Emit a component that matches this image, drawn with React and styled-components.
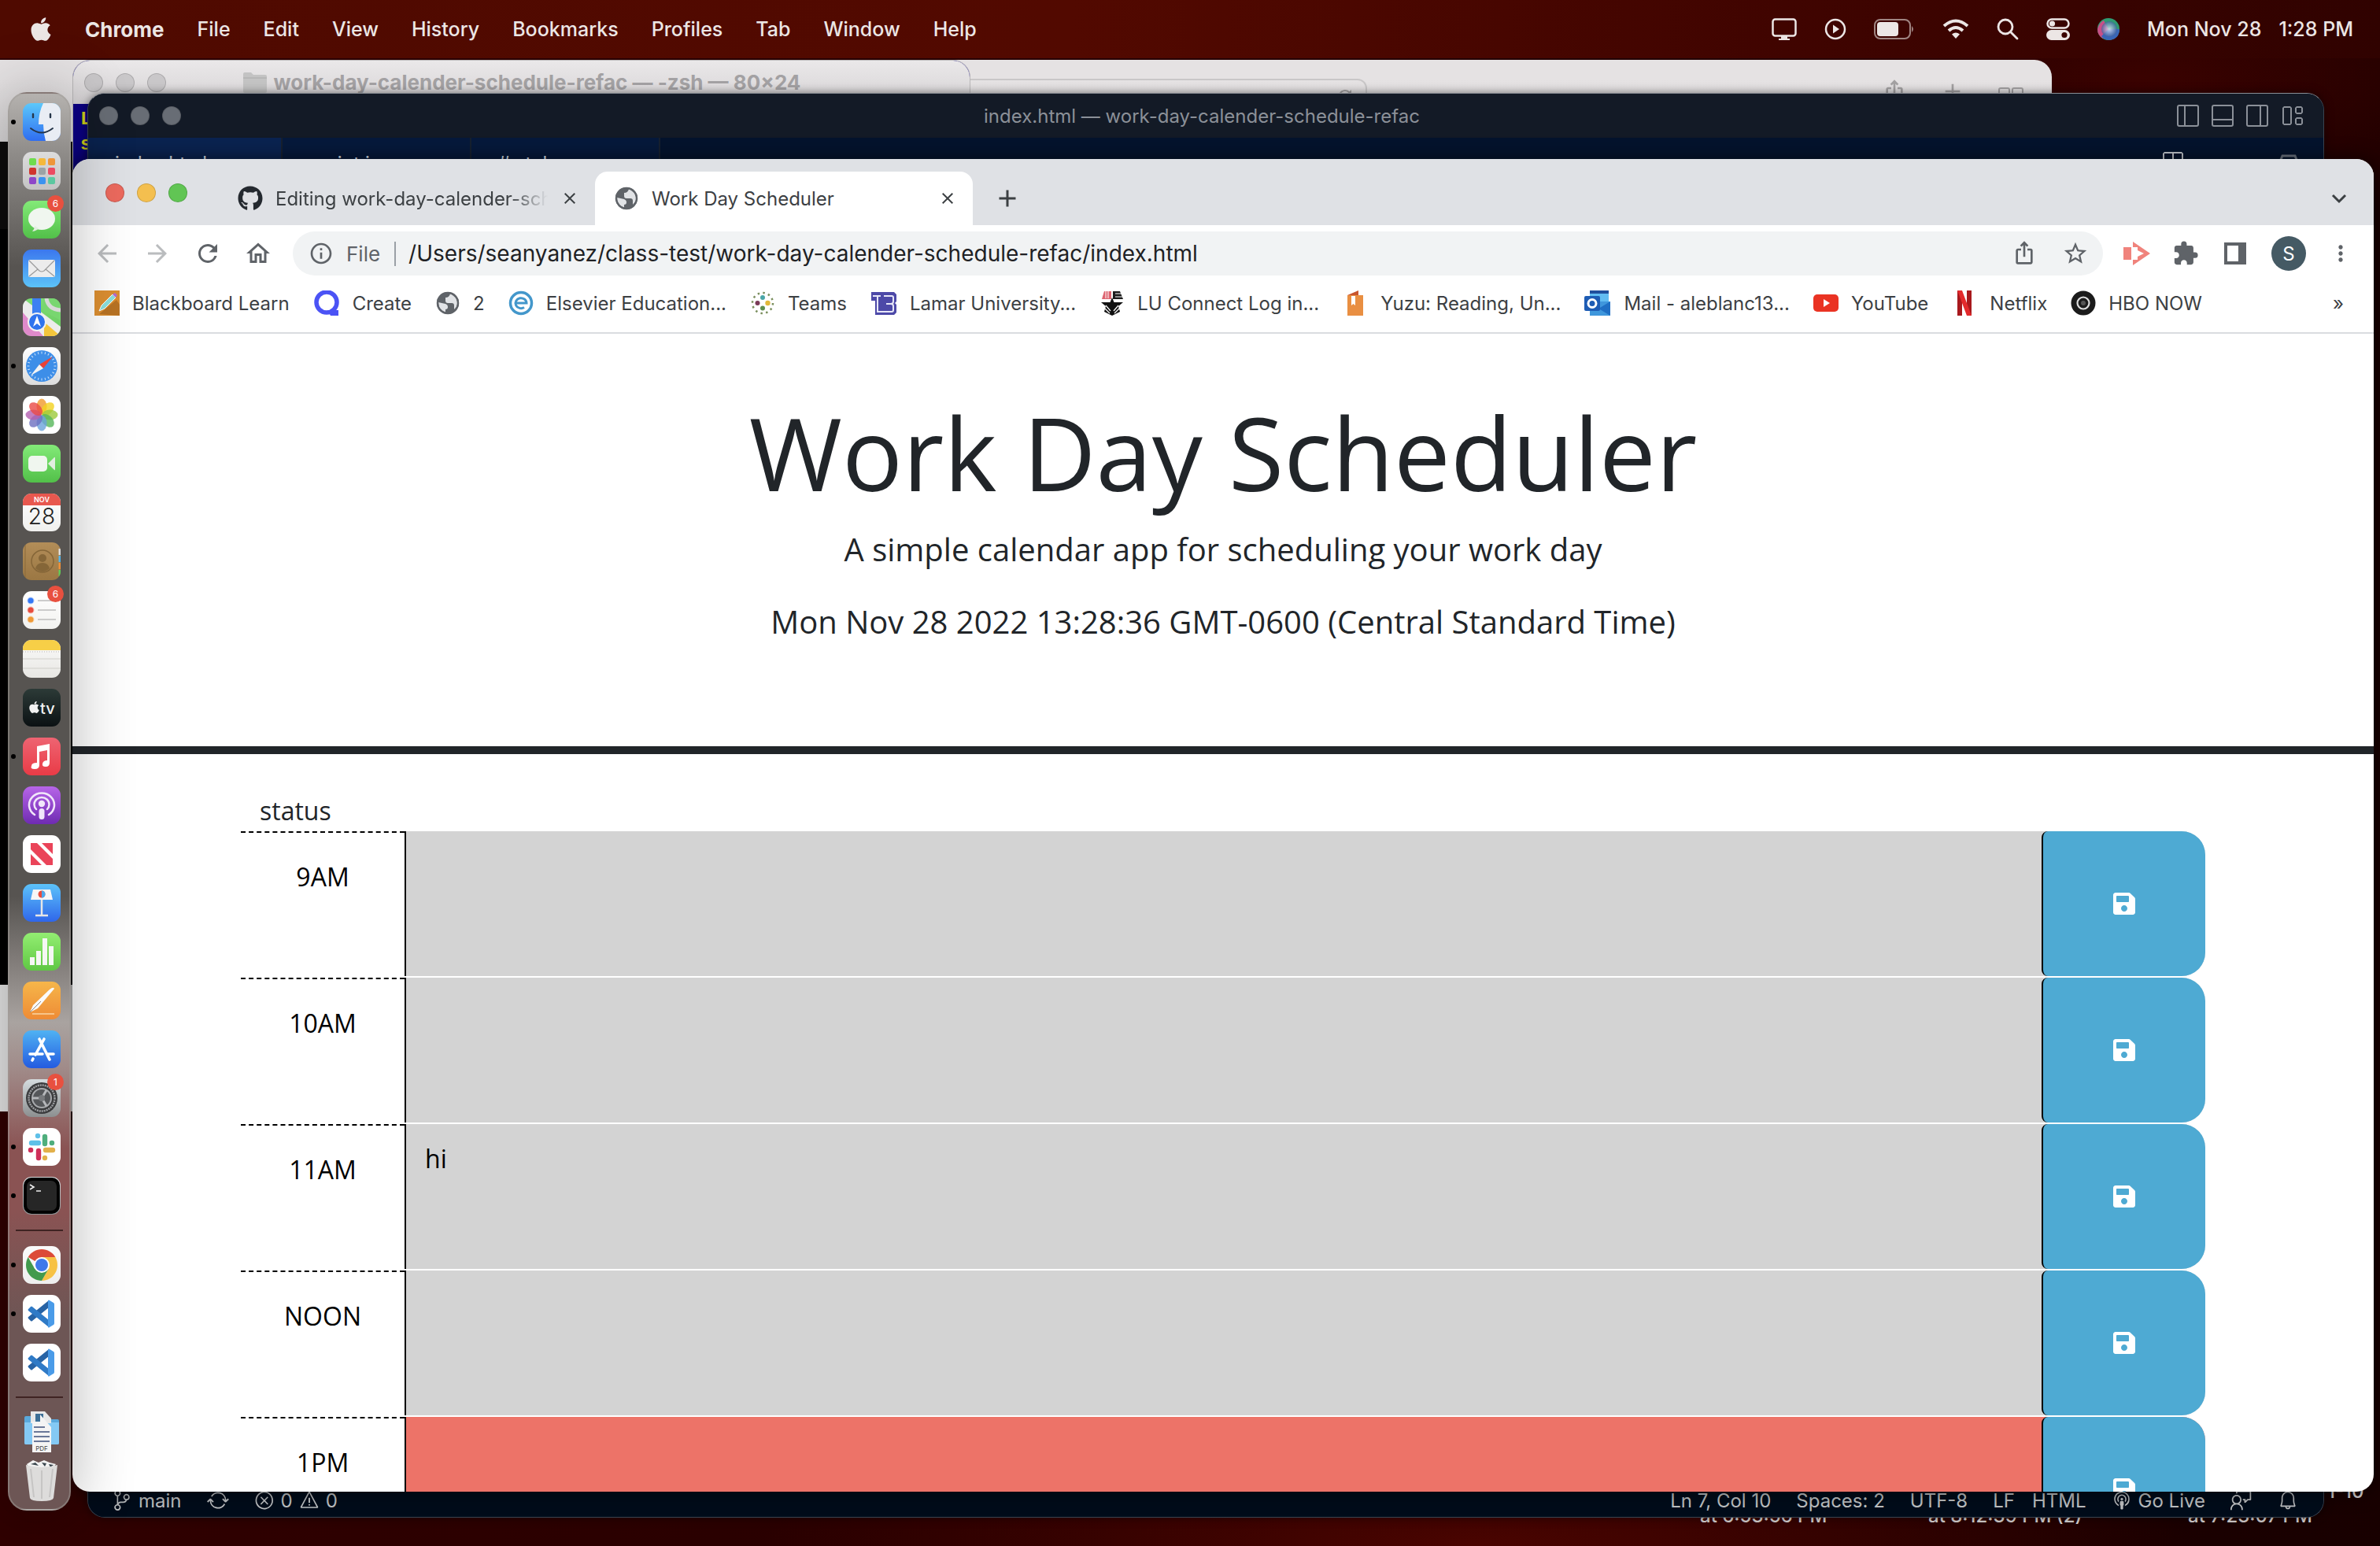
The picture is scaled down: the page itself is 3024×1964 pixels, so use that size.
import React from "react";
import styled, { createGlobalStyle, css } from "styled-components";
import { FaApple, FaSave, FaGithub } from "react-icons/fa";
import {
  MdArrowBack, MdArrowForward, MdRefresh, MdOutlineHome, MdInfoOutline, MdIosShare,
  MdStarBorder, MdExtension, MdMoreVert, MdClose, MdAdd,
} from "react-icons/md";
import {
  VscLayout, VscSourceControl,
  VscSync, VscError, VscWarning, VscBell, VscBroadcast, VscFeedback, VscSplitHorizontal,
} from "react-icons/vsc";

const ui = `Inter, "Liberation Sans", sans-serif`;
const web = `"Open Sans", "Noto Sans", sans-serif`;

const Global = createGlobalStyle`
  *, *::before, *::after { box-sizing: border-box; }
  body { margin: 0; background: #250000; font-family: ${ui}; }
  button, input, textarea { font: inherit; color: inherit; border: 0; padding: 0; margin: 0; background: none; }
  a { color: inherit; text-decoration: none; }
  svg { display: block; flex: none; }
`;

const Desktop = styled.div`
  position: relative;
  height: 100vh;
  overflow: hidden;
  background:
    radial-gradient(ellipse 30% 8% at 62% 100%, #4a0400, transparent),
    radial-gradient(ellipse 20% 10% at 90% 5%, #3a0200, transparent),
    linear-gradient(90deg, #300000, #240000 60%, #180000);
`;

/* ---------- menu bar ---------- */
const MenuBar = styled.header`
  height: 74px;
  display: flex;
  align-items: center;
  justify-content: space-between;
  padding: 0 34px 0 38px;
  background: linear-gradient(90deg, #4f0a00, #520900 45%, #400400 75%, #300200);
  color: #ece6e5;
  font-size: 25px;
  font-weight: 500;
`;
const MenuList = styled.nav`
  display: flex;
  align-items: center;
  gap: 42px;
`;
const AppleMenu = styled.button`
  width: 28px;
  display: flex;
  justify-content: center;
`;
const MenuItem = styled.button`
  font-size: ${(p) => (p.$strong ? 26 : 25)}px;
  font-weight: ${(p) => (p.$strong ? 700 : 500)};
`;
const StatusList = styled.div`
  display: flex;
  align-items: center;
  gap: 35px;
`;
const Clock = styled.time`
  display: flex;
  gap: 22px;
`;

/* ---------- windows ---------- */
const windowBase = css`
  position: absolute;
  overflow: hidden;
  border-radius: 22px;
`;
const SafariWindow = styled.section`
  ${windowBase}
  top: 76px;
  left: -40px;
  right: 417px;
  height: 1336px;
  background: linear-gradient(#e5e2e3 0 25px, #dad8d9 104px, #0d0c0c 104px 215px, #000 215px 1175px, #e6e6e6 1175px);
`;
const SafariBar = styled.div`
  height: 104px;
  padding: 24px 36px 0;
  display: flex;
  justify-content: flex-end;
  gap: 42px;
  color: #a3a1a2;
`;
const SafariField = styled.div`
  flex: none;
  width: 560px;
  height: 60px;
  margin-right: 612px;
  padding: 8px 14px;
  display: flex;
  justify-content: flex-end;
  border: 2px solid #c9c7c8;
  border-radius: 12px;
`;
const TerminalWindow = styled.section`
  ${windowBase}
  top: 76px;
  left: 92px;
  width: 1141px;
  height: 700px;
  background: #0c0087;
  border: 1px solid #b9b7b8;
  color: #e2e21c;
`;
const TerminalBar = styled.div`
  height: 55px;
  padding: 0 14px;
  display: grid;
  grid-template-columns: 1fr auto 1fr;
  align-items: center;
  background: linear-gradient(#eae8e9, #d6d3d5);
  color: #a3a1a3;
  font-size: 26px;
  font-weight: 700;
`;
const TerminalTitle = styled.div`
  display: flex;
  align-items: center;
  gap: 8px;
`;
const TerminalText = styled.pre`
  margin: 0;
  padding: 4px 9px;
  font: 700 24px/32px "Liberation Mono", monospace;
`;
const Lights = styled.div`
  display: flex;
  gap: 16px;
`;
const Light = styled.span`
  width: 24px;
  height: 24px;
  border-radius: 50%;
  background: ${(p) => p.$c};
  border: 1px solid rgba(0, 0, 0, 0.15);
`;
const CodeWindow = styled.section`
  ${windowBase}
  top: 118px;
  left: 111px;
  right: 71px;
  bottom: 36px;
  display: flex;
  flex-direction: column;
  background: #04132d;
  border: 1px solid #3a4450;
  border-top-color: #8b8f96;
  box-shadow: 0 0 12px rgba(0, 0, 0, 0.5);
`;
const CodeBar = styled.div`
  height: 56px;
  flex: none;
  padding: 0 24px 0 14px;
  display: grid;
  grid-template-columns: 1fr auto 1fr;
  align-items: center;
  background: #131a26;
  color: #8b9098;
  font-size: 24px;
`;
const CodeActions = styled.div`
  display: flex;
  justify-content: flex-end;
  gap: 12px;
`;
const CodeTabs = styled.div`
  flex: 1;
  display: flex;
  align-items: flex-start;
  color: #dfe5ee;
  font-size: 24px;
`;
const CodeTab = styled.div`
  width: ${(p) => (p.$active ? 247 : 240)}px;
  height: 70px;
  padding: 18px 34px;
  background: ${(p) => (p.$active ? "#0a2350" : "#06193b")};
  border-right: 2px solid #16202f;
`;
const CodeTabActions = styled.div`
  margin-left: auto;
  padding: 16px 28px;
  display: flex;
  gap: 116px;
  color: #c4c8ce;
`;
const CodeStatus = styled.footer`
  height: 42px;
  flex: none;
  padding: 0 32px 0 30px;
  display: flex;
  align-items: center;
  justify-content: space-between;
  background: #000c1a;
  color: #bfc1c3;
  font-size: 24px;
`;
const StatusSide = styled.div`
  display: flex;
  align-items: center;
  gap: 32px;
`;
const StatusItem = styled.span`
  display: flex;
  align-items: center;
  gap: 8px;
`;
const FileFormat = styled(StatusItem)`
  gap: 22px;
`;
const DesktopLabel = styled.span`
  position: absolute;
  left: ${(p) => p.$x}px;
  bottom: ${(p) => p.$b}px;
  color: #d9d4d4;
  font-size: 24px;
  font-weight: 500;
  line-height: 28px;
`;

/* ---------- browser ---------- */
const Browser = styled.section`
  ${windowBase}
  top: 202px;
  left: 92px;
  right: 8px;
  bottom: 69px;
  display: flex;
  flex-direction: column;
  background: #fff;
  color: #3c4043;
  box-shadow: 0 0 24px rgba(0, 0, 0, 0.6);
`;
const TabStrip = styled.div`
  height: 84px;
  flex: none;
  display: flex;
  align-items: flex-end;
  padding: 0 32px 0 42px;
  background: #dfe1e5;
  font-size: 24px;
`;
const StripLights = styled(Lights)`
  height: 70px;
  align-items: center;
  align-self: flex-start;
  padding-top: 16px;
`;
const Tab = styled.div`
  width: ${(p) => (p.$active ? 480 : 478)}px;
  height: 68px;
  margin-left: ${(p) => (p.$active ? 0 : 40)}px;
  padding: 0 20px 0 24px;
  display: flex;
  align-items: center;
  gap: 16px;
  background: ${(p) => (p.$active ? "#fff" : "transparent")};
  border-radius: 16px 16px 0 0;
`;
const TabName = styled.button`
  flex: 1;
  min-width: 0;
  overflow: hidden;
  text-align: left;
  white-space: nowrap;
  ${(p) => p.$fade && css`mask-image: linear-gradient(90deg, #000 86%, transparent);`}
`;
const IconButton = styled.button`
  display: flex;
  align-items: center;
  justify-content: center;
  height: ${(p) => p.$h || 36}px;
  color: ${(p) => p.$c || "inherit"};
  ${(p) => p.$end && css`margin-left: auto;`}
`;
const NewTab = styled(IconButton)`
  height: 68px;
  margin-left: 26px;
`;
const Toolbar = styled.div`
  height: 72px;
  flex: none;
  display: flex;
  align-items: center;
  padding: 0 26px;
  gap: 28px;
  color: #5f6368;
`;
const Omnibox = styled.label`
  flex: 1;
  height: 56px;
  margin: 0 -2px;
  padding: 0 18px 0 20px;
  display: flex;
  align-items: center;
  gap: 16px;
  border-radius: 28px;
  background: #f1f3f4;
  font-size: 26px;
`;
const Scheme = styled.span`
  padding-right: 18px;
  border-right: 2px solid #9aa0a6;
`;
const Url = styled.input`
  flex: 1;
  min-width: 0;
  color: #202124;
  font-size: 28px;
  outline: none;
`;
const OmniActions = styled.span`
  display: flex;
  gap: 32px;
`;
const Avatar = styled.button`
  width: 44px;
  height: 44px;
  border-radius: 50%;
  background: #455a64;
  color: #fff;
  font-size: 24px;
`;
const Bookmarks = styled.nav`
  height: 66px;
  flex: none;
  padding: 0 38px 10px 28px;
  display: flex;
  align-items: center;
  gap: 30px;
  border-bottom: 2px solid #dadce0;
  font-size: 24px;
`;
const Bookmark = styled.a`
  display: flex;
  align-items: center;
  gap: 16px;
  white-space: nowrap;
`;
const Page = styled.main`
  flex: 1;
  min-height: 0;
  overflow: hidden;
  font-family: ${web};
  color: #212529;
`;
const Hero = styled.header`
  height: 534px;
  padding: 74px 48px 0;
  text-align: center;
  border-bottom: 10px solid #212529;
`;
const Title = styled.h1`
  margin: 0 0 16px;
  font-size: 128px;
  font-weight: 400;
  line-height: 154px;
`;
const Lead = styled.p`
  margin: 0 0 32px;
  font-size: 40px;
  line-height: 60px;
`;
const Schedule = styled.div`
  padding: 48px 214px 0;
  font-size: 32px;
  line-height: 48px;
`;
const Status = styled.div`
  padding: 0 24px 2px;
`;
const slot = { past: "#d3d3d3", present: "#ed7368" };
const TimeBlock = styled.div`
  height: 184px;
  margin-bottom: 2px;
  display: grid;
  grid-template-columns: 1fr 10fr 1fr;
  background: ${(p) => slot[p.$when]};
  border-radius: 0 30px 30px 0;
  color: #000;
`;
const Hour = styled.label`
  padding-top: 32px;
  text-align: center;
  background: #fff;
  border-top: 2px dashed #000;
`;
const Entry = styled.textarea`
  padding: 20px 24px;
  resize: none;
  outline: none;
  border-left: 2px solid #000;
`;
const SaveButton = styled.button`
  display: flex;
  align-items: center;
  justify-content: center;
  color: #fff;
  background: #4eaad3;
  border-left: 2px solid #000;
  border-radius: 8px 30px 30px 8px;
`;

/* ---------- dock ---------- */
const Dock = styled.aside`
  position: absolute;
  left: 10px;
  top: 117px;
  width: 80px;
  padding: 12px 0 12px 6px;
  display: flex;
  flex-direction: column;
  align-items: center;
  gap: 14px;
  border: 2px solid rgba(160, 155, 152, 0.5);
  border-radius: 24px;
  background: linear-gradient(#b5b2af, #8d8a87 80px, #575451 220px, #575451 1020px, #a9a3a0 1180px, #a08a88 1240px, #8a5353 1340px, #8a5353 1420px, #6d5655 1560px, #6d5655);
  box-shadow: 0 0 80px rgba(0, 0, 0, 0.3);
`;
const DockApp = styled.button`
  position: relative;
  width: 48px;
  height: 48px;
  display: flex;
  align-items: center;
  ${(p) => p.$running && css`
    &::before {
      content: "";
      position: absolute;
      left: -15px;
      top: 21px;
      width: 6px;
      height: 6px;
      border-radius: 50%;
      background: #000;
    }
  `}
`;
const Badge = styled.span`
  position: absolute;
  right: -4px;
  top: -7px;
  width: 21px;
  height: 21px;
  border-radius: 50%;
  background: #e8503f;
  color: #fff;
  font-size: 12px;
  line-height: 21px;
  text-align: center;
`;
const DockRule = styled.hr`
  width: 60px;
  height: 2px;
  margin: 5px 6px 5px 0;
  border: 0;
  background: #3f2322;
`;

const Art = ({ a, b, children, id }) => (
  <svg width="48" height="48" viewBox="0 0 48 48" aria-hidden="true">
    <defs>
      <linearGradient id={id} x1="0" y1="0" x2="0" y2="1">
        <stop offset="0" stopColor={a} />
        <stop offset="1" stopColor={b} />
      </linearGradient>
      <clipPath id={`${id}-clip`}><rect width="48" height="48" rx="11" /></clipPath>
    </defs>
    <g clipPath={`url(#${id}-clip)`}>
      <rect width="48" height="48" fill={`url(#${id})`} />
      {children}
    </g>
  </svg>
);

const petals = ["#f09a2c", "#f2d21f", "#9ccb3b", "#56b65a", "#6aa3dc", "#6c6fc0", "#b35fb0", "#ea4a45"];
const ticks = Array.from({ length: 24 }, (_, i) => i * 15);

const CodeMark = () => (
  <>
    <path d="M33 7v9L12 33q-1 1-2 0l-3-3q-1-1 0-2z" fill="#2763a5" />
    <path d="M33 41v-9L12 15q-1-1-2 0l-3 3q-1 1 0 2z" fill="#2f7ac6" />
    <path d="M32 7q1-1 2 0l5 3q1 .6 1 2v24q0 1.400-1 2l-5 3q-1 1-2 0z" fill="#4a9be8" />
  </>
);

const apps = [
  { name: "Finder", running: true, art: (
    <Art id="finder" a="#5cc8fb" b="#2f6df0">
      <path d="M26 0Q20 12 20 27h6q0 11 3 21h19V0z" fill="#e9edf4" />
      <path d="M13 14v4M35 14v4" stroke="#26364a" strokeWidth="2.400" strokeLinecap="round" />
      <path d="M10 32q14 11 28 0" fill="none" stroke="#26364a" strokeWidth="2" strokeLinecap="round" />
    </Art>) },
  { name: "Launchpad", art: (
    <Art id="launchpad" a="#dcdcdc" b="#c4c4c4">
      {["#6fdc4e", "#f5b83a", "#ee963a", "#d0352f", "#9ba3a5", "#ec4a62", "#8e47c9", "#3b93f0", "#5cc8a0"].map((c, i) => (
        <rect key={c} x={8 + (i % 3) * 12} y={8 + Math.floor(i / 3) * 12} width="9" height="9" rx="2" fill={c} />
      ))}
    </Art>) },
  { name: "Messages", badge: 6, art: (
    <Art id="messages" a="#83ea78" b="#52c049">
      <ellipse cx="24" cy="23" rx="17" ry="14" fill="#f0f6ef" />
      <path d="M15 32q0 4-3 7 6-1 8-4z" fill="#e2eee0" />
    </Art>) },
  { name: "Mail", art: (
    <Art id="mail" a="#3b77ee" b="#5cc3f8">
      <rect x="7" y="13" width="34" height="22" rx="2" fill="#ececec" />
      <path d="M8 14l13 13q3 2 6 0l13-13M8 34l11-9M40 34l-11-9" fill="none" stroke="#9a9a9a" strokeWidth="1.200" />
    </Art>) },
  { name: "Maps", art: (
    <Art id="maps" a="#7ddc74" b="#67c95f">
      <path d="M0 0l48 36v12H22L0 22z" fill="#ececec" />
      <path d="M0 18l26 30H0z" fill="#df8acb" />
      <path d="M27 48V30l21 18z" fill="#f4c63c" />
      <path d="M26 0h22v28L26 16z" fill="#78d670" />
      <path d="M30 0q2 14 18 15" fill="none" stroke="#d8d8d8" strokeWidth="5" />
      <path d="M12 0h11v26H12z" fill="#3c80f2" />
      <circle cx="18" cy="30" r="11" fill="#2f74ee" stroke="#f2f2f2" strokeWidth="2" />
      <path d="M18 22l5 14-5-4-5 4z" fill="#fff" />
    </Art>) },
  { name: "Safari", running: true, art: (
    <Art id="safari" a="#ffffff" b="#dcdcdc">
      <circle cx="24" cy="24" r="20" fill="#3d8ee8" />
      {ticks.map((t) => <path key={t} d="M24 5.500v3" stroke="#cfe4fa" transform={`rotate(${t} 24 24)`} />)}
      <path d="M38 12L26 27l-5-5z" fill="#ea4236" />
      <path d="M10 36l11-14 5 5z" fill="#f4f4f4" />
    </Art>) },
  { name: "Photos", art: (
    <Art id="photos" a="#ffffff" b="#ffffff">
      {petals.map((c, i) => (
        <ellipse key={c} cx="24" cy="13.500" rx="6.500" ry="10" fill={c} fillOpacity=".8" transform={`rotate(${i * 45} 24 24)`} />
      ))}
    </Art>) },
  { name: "FaceTime", art: (
    <Art id="facetime" a="#83ea78" b="#52c049">
      <rect x="7" y="14" width="24" height="20" rx="5" fill="#f0f6ef" />
      <path d="M32 24l8-8q1-1 1 1v14q0 2-1 1z" fill="#e2eee0" />
    </Art>) },
  { name: "Calendar", art: (
    <Art id="calendar" a="#ffffff" b="#f0f0ee">
      <rect width="48" height="15" fill="#e8584f" />
      <text x="24" y="11" fontFamily="Inter, sans-serif" fontSize="9" fontWeight="600" fill="#fff" textAnchor="middle">NOV</text>
      <text x="24" y="39" fontFamily="Inter, sans-serif" fontSize="28" fontWeight="300" fill="#222" textAnchor="middle">28</text>
    </Art>) },
  { name: "Contacts", art: (
    <Art id="contacts" a="#b28d58" b="#9b7743">
      <path d="M3 0v48" stroke="#8a6a3a" />
      <circle cx="25" cy="24" r="14" fill="none" stroke="#856638" strokeWidth="1.500" />
      <circle cx="25" cy="20" r="5" fill="#856638" />
      <path d="M16 33q2-7 9-7t9 7q-9 8-18 0z" fill="#856638" />
      <path d="M47 8v8" stroke="#ddd" strokeWidth="3" />
      <path d="M47 17v8" stroke="#54b4ea" strokeWidth="3" />
      <path d="M47 26v8" stroke="#f0913a" strokeWidth="3" />
      <path d="M47 35v8" stroke="#5fce58" strokeWidth="3" />
    </Art>) },
  { name: "Reminders", badge: 6, art: (
    <Art id="reminders" a="#ffffff" b="#f2f2f0">
      {["#3478f6", "#e94c3d", "#f09a37"].map((c, i) => (
        <g key={c}>
          <circle cx="10" cy={12 + i * 12} r="3.500" fill={c} stroke={c} strokeOpacity=".35" strokeWidth="2" />
          <path d={`M19 ${12 + i * 12}h23`} stroke="#bdbdbd" strokeWidth="1.300" />
        </g>
      ))}
    </Art>) },
  { name: "Notes", art: (
    <Art id="notes" a="#fafafa" b="#e8e7e3">
      <rect width="48" height="13" fill="#f7cf47" />
      <path d="M0 15h48" stroke="#b9b7b0" strokeDasharray="1 2" />
      <path d="M0 24h48M0 36h48" stroke="#d0cfca" />
    </Art>) },
  { name: "TV", art: (
    <Art id="tv" a="#2c3a37" b="#0b1113">
      <FaApple x="6" y="15" size={17} color="#f2f2f2" />
      <text x="22" y="32" fontFamily="Inter, sans-serif" fontSize="20" fontWeight="500" fill="#f2f2f2">tv</text>
    </Art>) },
  { name: "Music", running: true, art: (
    <Art id="music" a="#ee6472" b="#e93b46">
      <path d="M18 11l16-3v24q0 5-5 5t-4-4 6-4V16l-10 2v17q0 5-6 5t-4-4q0-4 7-4z" fill="#fff" />
    </Art>) },
  { name: "Podcasts", art: (
    <Art id="podcasts" a="#b765e8" b="#6f2bb2">
      <g fill="none" stroke="#f1e6fa" strokeWidth="2.500" strokeLinecap="round">
        <path d="M15 36a16 15 0 1 1 18 0" />
        <path d="M17 29a9.500 9 0 1 1 14 0" />
      </g>
      <circle cx="24" cy="22" r="4.200" fill="#f1e6fa" />
      <rect x="20.500" y="28" width="7" height="14" rx="3.500" fill="#f1e6fa" />
    </Art>) },
  { name: "News", art: (
    <Art id="news" a="#ffffff" b="#ffffff">
      <path d="M10 10h8l20 20v8h-8L10 18z" fill="#ea4459" />
      <path d="M24 10h14v14zM10 24v14h14z" fill="#ea4459" />
    </Art>) },
  { name: "Keynote", art: (
    <Art id="keynote" a="#5cc3fa" b="#2f66ea">
      <path d="M13 7h22l3 13H10z" fill="#f6f6f6" />
      <circle cx="24" cy="13" r="4.500" fill="#e94c3d" />
      <path d="M24 13V8.500a4.500 4.500 0 0 1 0 9z" fill="#4aa9ee" />
      <path d="M24 20v20M16 40h16" stroke="#e6e6e6" strokeWidth="2.500" />
    </Art>) },
  { name: "Numbers", art: (
    <Art id="numbers" a="#93ee72" b="#5fc743">
      <path d="M9 31h6v10H9zM17 23h6v18h-6zM25 7h6v34h-6zM33 17h6v24h-6z" fill="#f5f7f4" />
    </Art>) },
  { name: "Pages", art: (
    <Art id="pages" a="#f6b64a" b="#ee8b35">
      <path d="M9 39l4-9L34 10q5-4 6-1L19 34z" fill="#fafafa" />
      <path d="M9 39l14-14" stroke="#888" />
      <path d="M12 41h28" stroke="#f9d5a5" strokeWidth="1.500" />
    </Art>) },
  { name: "App Store", art: (
    <Art id="appstore" a="#4fb2f3" b="#245be0">
      <g stroke="#fff" strokeWidth="3.600" strokeLinecap="round">
        <path d="M21 11l13 26M27 11L16 31M9 30h16M31 30h8M13 36l-1 2" />
      </g>
    </Art>) },
  { name: "System Preferences", badge: 1, art: (
    <Art id="settings" a="#d5dcdf" b="#8c8f90">
      <circle cx="24" cy="24" r="20" fill="#3a3b3d" />
      <circle cx="24" cy="24" r="16.500" fill="none" stroke="#9b9da0" strokeWidth="2.500" strokeDasharray="2 1" />
      <circle cx="24" cy="24" r="12" fill="#55575a" stroke="#a7a9ac" strokeWidth="2" />
      <path d="M24 24H12M24 24l6-10M24 24l6 10" stroke="#b5b7ba" strokeWidth="3" />
      <circle cx="24" cy="24" r="4" fill="#77797c" />
    </Art>) },
  { name: "Slack", running: true, art: (
    <Art id="slack" a="#ffffff" b="#ffffff">
      <g strokeWidth="6.400" strokeLinecap="round">
        <path d="M11 19h9M19 10v.1" stroke="#5fc0e8" />
        <path d="M28 11v9M37 19h-.1" stroke="#4fae7c" />
        <path d="M29 28h9M28 38v-.1" stroke="#e2b04a" />
        <path d="M20 29v9M10 28h.1" stroke="#cf2f59" />
      </g>
    </Art>) },
  { name: "Terminal", running: true, art: (
    <Art id="terminal" a="#d8dcde" b="#8f9395">
      <rect x="1" y="1" width="46" height="46" rx="10" fill="#000" />
      <rect x="5" y="5" width="38" height="38" rx="7" fill="#262626" />
      <path d="M9 10l5 3-5 3M17 18h6" fill="none" stroke="#eee" strokeWidth="1.600" />
    </Art>) },
];
const pinned = [
  { name: "Google Chrome", running: true, art: (
    <Art id="chrome" a="#fafafa" b="#eeeeee">
      <path d="M24 24L6.700 14A20 20 0 0 1 41.300 14z" fill="#dc4a38" />
      <path d="M24 14h17.300A20 20 0 0 1 24 44l8.600-15z" fill="#f7c244" />
      <path d="M6.700 14L15.300 29 32.600 29 24 44A20 20 0 0 1 6.700 14z" fill="#429a4d" />
      <circle cx="24" cy="24" r="10" fill="#fff" />
      <circle cx="24" cy="24" r="8" fill="#3f79ea" />
    </Art>) },
  { name: "Visual Studio Code", running: true, art: <Art id="code-a" a="#ffffff" b="#ffffff"><CodeMark /></Art> },
  { name: "Code", art: <Art id="code-b" a="#ffffff" b="#ffffff"><CodeMark /></Art> },
];

const FolderArt = () => (
  <svg width="48" height="52" viewBox="0 0 48 52" aria-hidden="true">
    <path d="M2 8q0-2 2-2h12l4 4h24q2 0 2 2v28q0 2-2 2H4q-2 0-2-2z" fill="#5aa9dc" />
    <path d="M2 14h44v26q0 2-2 2H4q-2 0-2-2z" fill="#84c9f4" />
    <path d="M10 0h18l8 9v6H10z" fill="#e8e8e8" />
    <path d="M16 3h10v10H16z" fill="#3d6f96" />
    <path d="M12 13h10V4l14 16v32H12z" fill="#f4f4f4" />
    <path d="M14 20h14M14 26h20M14 32h20M14 38h20" stroke="#6a7898" strokeWidth="2" />
    <text x="24" y="50" fontFamily="Inter, sans-serif" fontSize="8" fill="#444" textAnchor="middle">PDF</text>
  </svg>
);
const TrashArt = () => (
  <svg width="48" height="54" viewBox="0 0 48 54" aria-hidden="true">
    <path d="M5 6l8-5 7 3 7-3 7 3 8 2-4 5H8z" fill="#f2f2f2" />
    <path d="M10 6l6-2 4 4zM24 4l6 1-2 4zM33 6l6 1-4 3z" fill="#39454d" />
    <path d="M4 7q20 6 40 0l-5 42q-1 4-15 4T9 49z" fill="#dddcdb" />
    <path d="M10 12l4 36M24 14v36M38 12l-4 36" stroke="#c6c5c4" strokeWidth="2" />
  </svg>
);

const Globe = () => (
  <svg width="32" height="32" viewBox="0 0 32 32" aria-hidden="true">
    <circle cx="16" cy="16" r="14" fill="#5f6368" />
    <path d="M19 4q-1 5-6 5v4q0 3 3 3h5q3 0 3 3v5q5-4 4-10T19 4z" fill="#e8eaed" fillOpacity=".95" />
    <path d="M4 15l9 2q3 1 3 4t-3 3v4Q4 25 4 15z" fill="#e8eaed" fillOpacity=".95" />
    <circle cx="16" cy="16" r="13" fill="none" stroke="#5f6368" strokeWidth="2.500" />
  </svg>
);
const Panel = ({ line }) => (
  <svg width="32" height="32" viewBox="0 0 32 32" fill="none" stroke="currentColor" strokeWidth="2" aria-hidden="true">
    <rect x="3" y="3" width="26" height="26" rx="2" />
    <path d={line} />
  </svg>
);

const bookmarks = [
  ["Blackboard Learn", <svg width="32" height="32" viewBox="0 0 32 32"><path d="M0 0h32v32H0z" fill="#dc8f31" /><path d="M6 30L28 12l4 6v14z" fill="#b87324" /><path d="M6 26l3-7L23 5l4 4-14 14z" fill="#8be0dc" stroke="#fff" /><path d="M23 5l3-2 3 3-2 3z" fill="#b56bd0" /></svg>],
  ["Create", <svg width="34" height="32" viewBox="0 0 34 32"><circle cx="17" cy="15" r="13" fill="none" stroke="#4b53f5" strokeWidth="5.500" /><path d="M18 25h14v7H22z" fill="#4b53f5" /></svg>],
  ["2", <Globe />],
  ["Elsevier Education...", <svg width="32" height="32" viewBox="0 0 32 32"><circle cx="16" cy="16" r="13.500" fill="#fff" stroke="#4397cb" strokeWidth="3.500" /><path d="M9 16h14a7 6.500 0 1 0-3 5.500" fill="none" stroke="#4397cb" strokeWidth="3" /></svg>],
  ["Teams", <svg width="32" height="32" viewBox="0 0 32 32"><circle cx="16" cy="16" r="13" fill="none" stroke="#7b8f5e" strokeWidth="2.500" strokeDasharray="2.500 4.300" /><circle cx="16" cy="9" r="3" fill="#4aa6a8" /><circle cx="22.500" cy="16" r="3.200" fill="#e2b93a" /><circle cx="16" cy="22.500" r="3" fill="#5e8f4e" /><circle cx="9.500" cy="16" r="3" fill="#7a3b58" /></svg>],
  ["Lamar University...", <svg width="34" height="32" viewBox="0 0 34 32"><path d="M1 2h29l3 3v9l-2 2 2 2v10l-3 3H6V13H1z" fill="#4d49a8" /><path d="M3 7h10M9 7v20h18q2 0 2-2v-5q0-3-3-3h-6M17 7h10q2 0 2 2v5q0 3-3 3" fill="none" stroke="#e8e8f8" strokeWidth="2" /></svg>],
  ["LU Connect Log in...", <svg width="32" height="32" viewBox="0 0 32 32"><path d="M6 1h9v10H3z" fill="#dd6470" /><path d="M17 1h9l4 10H17z" fill="#1d1d1d" /><path d="M8 1v9M11 1v9M20 4h8M20 8h9" stroke="#fff" /><path d="M16 9l2.500 6H30l-6 5 2 7-10 5-10-5 2-7-6-5h11.500z" fill="#111" /><path d="M5 21l8 8M8 19l6 7M27 21l-8 8M24 19l-6 7" stroke="#fff" strokeWidth="1.200" /></svg>],
  ["Yuzu: Reading, Un...", <svg width="32" height="32" viewBox="0 0 32 32"><path d="M6 6h20v26H6z" fill="#e98f42" /><path d="M6 6L20 0v6z" fill="#c8552e" /><path d="M11 7h5v12l-2.500-2-2.500 2z" fill="#fff" /></svg>],
  ["Mail - aleblanc13...", <svg width="34" height="32" viewBox="0 0 34 32"><path d="M7 0h24v16H7z" fill="#62bdf2" /><path d="M7 0h24v4H7z" fill="#1f4f9c" /><path d="M7 14h26v18H7z" fill="#3f97dc" /><path d="M33 14v18L18 23z" fill="#1f6fc4" /><rect y="7" width="20" height="19" rx="2" fill="#1d5cb4" /><circle cx="10" cy="16.500" r="5" fill="none" stroke="#fff" strokeWidth="3" /></svg>],
  ["YouTube", <svg width="32" height="32" viewBox="0 0 32 32"><rect y="5" width="32" height="22" rx="5" fill="#ea3323" /><path d="M13 11l8 5-8 5z" fill="#fff" /></svg>],
  ["Netflix", <svg width="32" height="32" viewBox="0 0 32 32"><path d="M7 0h6v32H7zM19 0h6v32h-6z" fill="#a8191d" /><path d="M7 0h6l12 32h-6z" fill="#e32a2c" /></svg>],
  ["HBO NOW", <svg width="32" height="32" viewBox="0 0 32 32"><circle cx="16" cy="16" r="15.500" fill="#1b1b1b" /><circle cx="16" cy="16" r="7.500" fill="none" stroke="#ddd" strokeWidth="2.200" /><circle cx="16" cy="16" r="3" fill="#555" /></svg>],
];

const rows = [
  ["9AM", "past", ""], ["10AM", "past", ""], ["11AM", "past", "hi"], ["NOON", "past", ""], ["1PM", "present", ""],
];

const StatusIcons = () => (
  <>
    <svg width="32" height="30" viewBox="0 0 32 30"><rect x="1.500" y="2.500" width="29" height="21" rx="3" fill="none" stroke="#ece6e5" strokeWidth="2.500" /><path d="M12 24h8v3h3v2H9v-2h3z" fill="#ece6e5" /></svg>
    <svg width="28" height="28" viewBox="0 0 28 28"><circle cx="14" cy="14" r="12" fill="none" stroke="#ece6e5" strokeWidth="2.500" /><path d="M11 8.500l8 5.500-8 5.500z" fill="#ece6e5" /></svg>
    <svg width="52" height="26" viewBox="0 0 52 26"><rect x="1" y="1" width="45" height="24" rx="7" fill="none" stroke="#a08582" strokeWidth="2" /><rect x="4" y="4" width="27" height="18" rx="4" fill="#ece6e5" /><path d="M48 9q4 4 0 8z" fill="#a08582" /></svg>
    <svg width="34" height="26" viewBox="0 0 34 26" fill="none" stroke="#ece6e5" strokeWidth="4"><path d="M2 9q15-13 30 0M8 15q9-8 18 0" /><path d="M12 19.500q5-4 10 0L17 25z" fill="#ece6e5" stroke="none" /></svg>
    <svg width="28" height="28" viewBox="0 0 28 28" fill="none" stroke="#ece6e5" strokeWidth="2.800" strokeLinecap="round"><circle cx="11" cy="11" r="9" /><path d="M18 18l8 8" /></svg>
    <svg width="30" height="28" viewBox="0 0 30 28"><rect x="1.500" y="1.500" width="27" height="11" rx="5.500" fill="none" stroke="#ece6e5" strokeWidth="2.500" /><circle cx="7.500" cy="7" r="3.600" fill="#ece6e5" /><rect x="0" y="15" width="30" height="13" rx="6.500" fill="#ece6e5" /><circle cx="23" cy="21.500" r="3.600" fill="#3a0300" /></svg>
    <svg width="28" height="28" viewBox="0 0 28 28"><defs><radialGradient id="siri"><stop offset="0" stopColor="#fff" /><stop offset=".35" stopColor="#b6c4e4" /><stop offset="1" stopColor="#3c5f9c" /></radialGradient></defs><circle cx="14" cy="14" r="14" fill="#2f9a72" /><path d="M0 14q2-8 8-11l6 11-7 12Q0 22 0 14z" fill="#c94f86" /><path d="M28 14q0 12-12 14-8 0-11-5l9-9z" fill="#3a66b8" /><circle cx="15" cy="14" r="10" fill="url(#siri)" fillOpacity=".7" /></svg>
  </>
);

function DockItem({ item }) {
  return (
    <DockApp $running={item.running} aria-label={item.name}>
      {item.art}
      {item.badge && <Badge>{item.badge}</Badge>}
    </DockApp>
  );
}

export default function App() {
  return (
    <Desktop>
      <Global />
      <MenuBar>
        <MenuList>
          <AppleMenu aria-label="Apple menu"><FaApple size={34} /></AppleMenu>
          {["Chrome", "File", "Edit", "View", "History", "Bookmarks", "Profiles", "Tab", "Window", "Help"].map((m, i) => (
            <MenuItem key={m} $strong={i === 0}>{m}</MenuItem>
          ))}
        </MenuList>
        <StatusList>
          <StatusIcons />
          <Clock><span>Mon Nov 28</span><span>1:28 PM</span></Clock>
        </StatusList>
      </MenuBar>

      <DesktopLabel $x={2160} $b={24}>at 6:53:56 PM</DesktopLabel>
      <DesktopLabel $x={2450} $b={24}>at 8:12:39 PM (2)</DesktopLabel>
      <DesktopLabel $x={2780} $b={24}>at 7:23:07 PM</DesktopLabel>
      <DesktopLabel $x={2957} $b={55}>1-10</DesktopLabel>

      <SafariWindow>
        <SafariBar>
          <SafariField><MdRefresh size={24} /></SafariField>
          <MdIosShare size={32} />
          <MdAdd size={32} />
          <svg width="32" height="30" viewBox="0 0 32 30" fill="none" stroke="currentColor" strokeWidth="2"><rect x="1" y="12" width="13" height="13" rx="2" /><rect x="18" y="12" width="13" height="13" rx="2" /></svg>
        </SafariBar>
      </SafariWindow>

      <TerminalWindow>
        <TerminalBar>
          <Lights>{[0, 1, 2].map((i) => <Light key={i} $c="#c9c7c9" />)}</Lights>
          <TerminalTitle>
            <svg width="32" height="28" viewBox="0 0 32 28"><path d="M1 3q0-2 2-2h8l3 3h15q2 0 2 2v19q0 2-2 2H3q-2 0-2-2z" fill="#c3c3c3" /><path d="M1 8h30" stroke="#aaa" /></svg>
            work-day-calender-schedule-refac — -zsh — 80×24
          </TerminalTitle>
          <span />
        </TerminalBar>
        <TerminalText>{"L\ns"}</TerminalText>
      </TerminalWindow>

      <CodeWindow>
        <CodeBar>
          <Lights>{[0, 1, 2].map((i) => <Light key={i} $c="#686d75" />)}</Lights>
          <span>index.html — work-day-calender-schedule-refac</span>
          <CodeActions>
            <Panel line="M12 3v26" />
            <Panel line="M3 21h26" />
            <Panel line="M20 3v26" />
            <VscLayout size={32} />
          </CodeActions>
        </CodeBar>
        <CodeTabs>
          <CodeTab $active>index.html</CodeTab>
          <CodeTab>script.js</CodeTab>
          <CodeTab># style.css</CodeTab>
          <CodeTabActions>
            <VscSplitHorizontal size={32} />
            <svg width="32" height="32" viewBox="0 0 32 32" fill="none" stroke="#6c7480" strokeWidth="3"><path d="M5 14l3-7h16l3 7" /></svg>
          </CodeTabActions>
        </CodeTabs>
        <CodeStatus>
          <StatusSide>
            <StatusItem><VscSourceControl size={26} />main</StatusItem>
            <VscSync size={28} />
            <StatusItem><VscError size={26} />0<VscWarning size={26} />0</StatusItem>
          </StatusSide>
          <StatusSide>
            <span>Ln 7, Col 10</span>
            <span>Spaces: 2</span>
            <span>UTF-8</span>
            <FileFormat><span>LF</span><span>HTML</span></FileFormat>
            <StatusItem><VscBroadcast size={26} />Go Live</StatusItem>
            <VscFeedback size={28} />
            <VscBell size={26} />
          </StatusSide>
        </CodeStatus>
      </CodeWindow>

      <Browser>
        <TabStrip>
          <StripLights>
            <Light $c="#ec6a5e" /><Light $c="#f4bf4f" /><Light $c="#61c554" />
          </StripLights>
          <Tab>
            <FaGithub size={32} color="#24292f" />
            <TabName $fade>Editing work-day-calender-sch</TabName>
            <IconButton aria-label="Close tab"><MdClose size={24} /></IconButton>
          </Tab>
          <Tab $active>
            <Globe />
            <TabName>Work Day Scheduler</TabName>
            <IconButton aria-label="Close tab"><MdClose size={24} /></IconButton>
          </Tab>
          <NewTab aria-label="New tab"><MdAdd size={36} /></NewTab>
          <IconButton $end $h={68} aria-label="Search tabs">
            <svg width="24" height="16" viewBox="0 0 24 16" fill="none" stroke="currentColor" strokeWidth="3"><path d="M4 4l8 8 8-8" /></svg>
          </IconButton>
        </TabStrip>
        <Toolbar>
          <IconButton $c="#babcbe" aria-label="Back"><MdArrowBack size={36} /></IconButton>
          <IconButton $c="#babcbe" aria-label="Forward"><MdArrowForward size={36} /></IconButton>
          <IconButton aria-label="Reload"><MdRefresh size={36} /></IconButton>
          <IconButton aria-label="Home"><MdOutlineHome size={36} /></IconButton>
          <Omnibox>
            <MdInfoOutline size={32} />
            <Scheme>File</Scheme>
            <Url aria-label="Address" defaultValue="/Users/seanyanez/class-test/work-day-calender-schedule-refac/index.html" />
            <OmniActions><MdIosShare size={32} /><MdStarBorder size={34} /></OmniActions>
          </Omnibox>
          <IconButton aria-label="Recorder">
            <svg width="34" height="34" viewBox="0 0 34 34"><path d="M0 9h10v16H0zM12 2l22 15-22 15v-7h6v-4l8-4-8-4V9h-6z" fill="#f0837c" /></svg>
          </IconButton>
          <IconButton aria-label="Extensions"><MdExtension size={34} /></IconButton>
          <IconButton aria-label="Side panel">
            <svg width="36" height="36" viewBox="0 0 36 36"><path d="M4 4h28v28H4zM8 8v20h14V8z" fill="currentColor" fillRule="evenodd" /></svg>
          </IconButton>
          <Avatar>S</Avatar>
          <IconButton aria-label="Menu"><MdMoreVert size={32} /></IconButton>
        </Toolbar>
        <Bookmarks>
          {bookmarks.map(([label, icon]) => (
            <Bookmark key={label} href="#">{icon}{label}</Bookmark>
          ))}
          <IconButton $end aria-label="More bookmarks">»</IconButton>
        </Bookmarks>
        <Page>
          <Hero>
            <Title>Work Day Scheduler</Title>
            <Lead>A simple calendar app for scheduling your work day</Lead>
            <Lead>Mon Nov 28 2022 13:28:36 GMT-0600 (Central Standard Time)</Lead>
          </Hero>
          <Schedule>
            <Status>status</Status>
            {rows.map(([hour, when, text]) => (
              <TimeBlock key={hour} $when={when}>
                <Hour htmlFor={`slot-${hour}`}>{hour}</Hour>
                <Entry id={`slot-${hour}`} defaultValue={text} />
                <SaveButton aria-label={`Save ${hour}`}><FaSave size={32} /></SaveButton>
              </TimeBlock>
            ))}
          </Schedule>
        </Page>
      </Browser>

      <Dock>
        {apps.map((item) => <DockItem key={item.name} item={item} />)}
        <DockRule />
        {pinned.map((item) => <DockItem key={item.name} item={item} />)}
        <DockRule />
        <DockApp aria-label="Downloads"><FolderArt /></DockApp>
        <DockApp aria-label="Trash"><TrashArt /></DockApp>
      </Dock>
    </Desktop>
  );
}
